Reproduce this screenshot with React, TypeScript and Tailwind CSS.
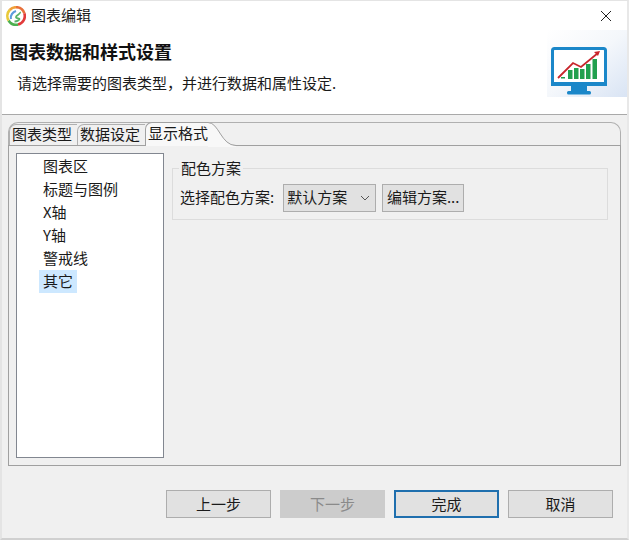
import React from "react";

const font = { fontFamily: '"Microsoft YaHei","Noto Sans CJK SC",sans-serif' };

function Logo() {
  return (
    <svg width="20" height="20" viewBox="0 0 20 20" className="shrink-0">
      <path d="M10 1.200a8.800 8.800 0 0 1 8.400 6.200" fill="none" stroke="#e8703a" strokeWidth="2.6" />
      <path d="M18.400 7.400A8.800 8.800 0 0 1 12 18.600" fill="none" stroke="#e23b3b" strokeWidth="2.6" />
      <path d="M12 18.600A8.800 8.800 0 0 1 2.600 14.500" fill="none" stroke="#4cb04f" strokeWidth="2.6" />
      <path d="M2.600 14.500A8.800 8.800 0 0 1 3.700 4" fill="none" stroke="#e9c93a" strokeWidth="2.6" />
      <path d="M3.700 4A8.800 8.800 0 0 1 10 1.200" fill="none" stroke="#f0a13a" strokeWidth="2.6" />
      <path d="M5 13c-1-4 2-7 5-8" fill="none" stroke="#5b9bdc" strokeWidth="2.2" />
      <path d="M14 6c1 2-4 3-4 5s3.500 1 3.500 2-2.500 2.500-5 2.500" fill="none" stroke="#58b368" strokeWidth="1.8" />
    </svg>
  );
}

function Monitor() {
  return (
    <svg width="56" height="50" viewBox="0 0 56 50">
      <rect x="1.5" y="1.5" width="53" height="36" rx="2" fill="#fff" stroke="#1b87c9" strokeWidth="3" />
      <rect x="0" y="35" width="56" height="4" fill="#1b87c9" />
      <rect x="20" y="39" width="16" height="6" fill="#1b87c9" />
      <rect x="16" y="44" width="24" height="3.5" rx="1.5" fill="#1b87c9" />
      <rect x="10" y="30" width="4" height="1.5" fill="#21a04e" />
      <rect x="17" y="23" width="4.5" height="9" fill="#21a04e" />
      <rect x="23" y="21" width="4.5" height="11" fill="#21a04e" />
      <rect x="29" y="22" width="4.5" height="10" fill="#21a04e" />
      <rect x="35" y="17" width="4.5" height="15" fill="#21a04e" />
      <rect x="41.500" y="12" width="4.5" height="20" fill="#21a04e" />
      <path d="M7 31 L22 16 L30 20 L47 6" fill="none" stroke="#c8262c" strokeWidth="1.8" />
      <path d="M43 5 L49 4 L47 9 Z" fill="#c8262c" />
    </svg>
  );
}

function Btn({ label, cls }: { label: string; cls: string }) {
  return (
    <div className={`w-[105px] h-[28px] flex items-center justify-center text-[15px] ${cls}`}>{label}</div>
  );
}

export default function App() {
  const items = ["图表区", "标题与图例", "X轴", "Y轴", "警戒线", "其它"];
  return (
    <div
      style={font}
      className="relative w-[629px] h-[540px] overflow-hidden bg-[#f0f0f0] text-[#1a1a1a] border-l-2 border-r-2 border-t border-b-2 border-l-[#e4e4e4] border-r-[#e8e8e8] border-t-[#e4e4e4] border-b-[#d0d0d0] flex flex-col"
    >
      <div className="relative h-[114px] shrink-0 bg-white border-b border-[#a9a9a9]">
        <div className="h-[29px] flex items-center pl-[4px] gap-[5px] text-[15px]">
          <Logo />
          <span>图表编辑</span>
          <svg width="12" height="12" viewBox="0 0 12 12" className="ml-auto mr-[15px]">
            <path d="M1 1 L11 11 M11 1 L1 11" stroke="#222" strokeWidth="1" fill="none" />
          </svg>
        </div>
        <div className="pl-[8px] pt-[8px] text-[18px] leading-[26px] font-bold text-[#111]">图表数据和样式设置</div>
        <div className="pl-[15px] pt-[8px] text-[15px] leading-[22px]">请选择需要的图表类型，并进行数据和属性设定.</div>
        <div className="absolute right-0 top-[29px] w-[80px] h-[67px] bg-gradient-to-br from-white via-[#f4f7fb] to-[#d9e4f4]" />
        <div className="absolute left-[549px] top-[46px]">
          <Monitor />
        </div>
      </div>

      <div className="relative ml-[6px] mt-[7px] w-[613px] h-[344px] flex flex-col">
        <div className="absolute inset-x-0 top-0 h-[24px] rounded-t-[10px] border-t border-x border-[#b0b0b0]" />
        <div className="relative h-[24px] flex items-end pl-[1px] text-[15px] leading-[22px] border-b border-[#a0a0a0]">
          <div className="w-[68px] h-[21px] px-[2px] pb-[2px] rounded-tl-[7px] border-l border-t border-[#b0b0b0] flex items-center">图表类型</div>
          <div className="w-[68px] h-[21px] px-[2px] pb-[2px] rounded-tl-[7px] border-l border-t border-[#b0b0b0] flex items-center">数据设定</div>
          <div className="relative w-[64px] h-[24px] mb-[-1px] pl-[2px] pb-[4px] rounded-tl-[7px] border-l border-t border-[#a0a0a0] bg-[#f8f8f8] flex items-center whitespace-nowrap z-10">
            显示格式
            <svg width="28" height="25" viewBox="0 0 28 25" className="absolute left-[62px] top-[-1px]">
              <path d="M0 .5 C11 .5 13 23.500 28 23.500 L28 25 L0 25 Z" fill="#f8f8f8" />
              <path d="M0 .5 C11 .5 13 23.500 28 23.500" fill="none" stroke="#a0a0a0" />
            </svg>
          </div>
        </div>
        <div className="flex-1 border border-t-0 border-[#a0a0a0] pl-[7px] pr-[12px] pt-[7px] pb-[6px] flex">
          <div className="w-[148px] h-[305px] shrink-0 bg-white border border-[#828790] pt-[1px] pl-[22px] text-[15px]">
            {items.map((t, i) => (
              <div key={t} className="h-[23px] flex items-center">
                <span className={`px-[4px] h-[23px] flex items-center ${i === 5 ? "bg-[#cde8ff]" : ""}`}>{t}</span>
              </div>
            ))}
          </div>
          <div className="ml-[8px] flex-1 pt-[15px]">
            <div className="relative h-[52px] border border-[#dcdcdc] flex items-center pl-[7px] pt-[7px] gap-[8px] text-[15px]">
              <span className="absolute left-[6px] top-[-10px] bg-[#f0f0f0] px-[2px] leading-[18px]">配色方案</span>
              <span className="pr-[1px]">选择配色方案:</span>
              <div className="w-[93px] h-[28px] bg-[#e1e1e1] border border-[#adadad] flex items-center pl-[3px] pr-[5px] justify-between">
                默认方案
                <svg width="10" height="6" viewBox="0 0 10 6"><path d="M1 1 L5 5 L9 1" fill="none" stroke="#555" /></svg>
              </div>
              <div className="ml-[-2px] w-[82px] h-[28px] bg-[#e1e1e1] border border-[#adadad] flex items-center justify-center">编辑方案...</div>
            </div>
          </div>
        </div>
      </div>

      <div className="flex gap-[9px] pl-[164px] mt-[24px]">
        <Btn label="上一步" cls="bg-[#e1e1e1] border border-[#adadad]" />
        <Btn label="下一步" cls="bg-[#cccccc] text-[#8a8a8a]" />
        <Btn label="完成" cls="bg-[#e1e1e1] border-2 border-[#1f6fae]" />
        <Btn label="取消" cls="bg-[#e1e1e1] border border-[#adadad]" />
      </div>
    </div>
  );
}
